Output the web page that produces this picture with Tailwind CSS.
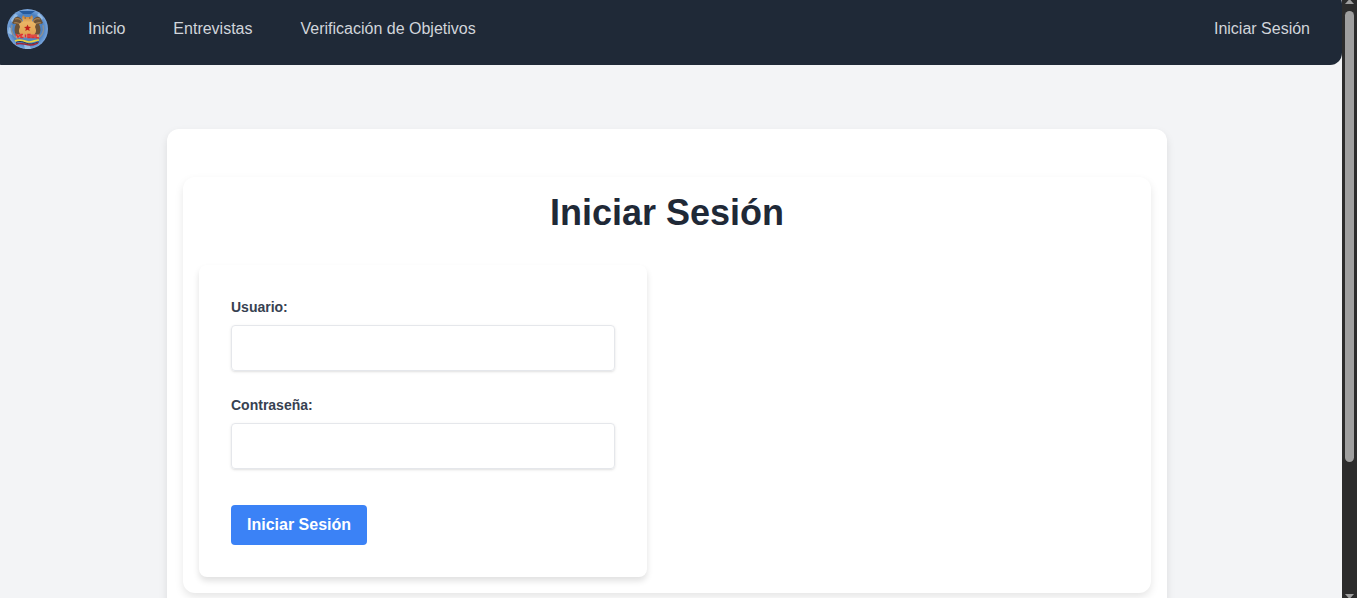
<!DOCTYPE html>
<html lang="es">
<head>
  <meta charset="UTF-8" />
  <meta name="viewport" content="width=device-width, initial-scale=1.0" />
  <title>Iniciar Sesión</title>
  <script src="https://cdn.jsdelivr.net/npm/@tailwindcss/browser@4"></script>
</head>
<body class="flex h-screen overflow-hidden bg-[#f3f4f6] font-['Liberation_Sans',Arial,sans-serif]">
  <div class="min-w-0 flex-1 overflow-hidden">
    <div class="-ml-2 -mt-2">
      <header class="rounded-xl rounded-bl-[10px] bg-[#1f2937] pt-[17px] pb-[15px] pl-[15px] pr-8">
        <nav class="flex items-start text-base text-[#d1d5db]">
          <a href="#" class="mr-10 shrink-0" aria-label="Inicio">
            <svg class="h-[41px] w-[41px]" viewBox="0 0 41 41">
              <defs>
                <radialGradient id="sky" cx="50%" cy="50%" r="50%">
                  <stop offset="0" stop-color="#6d96c4" />
                  <stop offset=".75" stop-color="#4a80c0" />
                  <stop offset="1" stop-color="#79a5dc" />
                </radialGradient>
                <linearGradient id="gold" x1="0" y1="0" x2="0" y2="1">
                  <stop offset="0" stop-color="#c07c38" />
                  <stop offset=".35" stop-color="#eab565" />
                  <stop offset="1" stop-color="#e0a050" />
                </linearGradient>
              </defs>
              <ellipse cx="20.5" cy="20" rx="20.500" ry="20" fill="url(#sky)" />
              <path d="M4 11l4-6 3 1-6 8zM32 4l4 5-1 2-5-5zM17 36l5-1 2 5h-6zM2 18l3 2v6l-4-2z" fill="#b5d5ee" opacity=".6" />
              <path d="M12 2h16l-4 3h-8z" fill="#255a9d" />
              <!-- alas -->
              <path d="M15 11c-3-4-6-4-8-1l-2 4c1 1 3 1 4 1-2 4-2 8 0 11l6 1z" fill="#6b5238" />
              <path d="M26 11c3-4 6-4 8-1l2 4c-1 1-3 1-4 1 2 4 2 8 0 11l-6 1z" fill="#6b5238" />
              <path d="M8 10c3-1 6 0 7 3M7 14c3-1 5 0 7 2M33 10c-3-1-6 0-7 3M34 14c-3-1-5 0-7 2" fill="none" stroke="#a98253" stroke-width="1.200" />
              <path d="M5 16c-2 7 2 12 6 14M36 16c2 7-2 12-6 14" fill="none" stroke="#8b8f94" stroke-width="1.500" />
              <!-- escudo -->
              <path d="M16 6l2 2h5l2-2 1 3-1 3 4 3-1 3c2 4 1 6-2 9H15c-3-3-4-5-2-9l-1-3 4-3-1-3z" fill="url(#gold)" />
              <path d="M17.500 9h1.500M22 9h1.500" stroke="#80502a" stroke-width="1" />
              <path d="M20.500 15.500l1 2.300 2.500.200-1.900 1.600.6 2.400-2.200-1.300-2.200 1.300.6-2.400-1.900-1.600 2.500-.2z" fill="#bf1f1b" />
              <!-- cintas -->
              <path d="M9 27h23" stroke="#d59f80" stroke-width="3" />
              <path d="M9 25l2 3 2-2M16 25.500h-2v3h2.500M18.500 25.500v3M21 28.500v-3h2v3zM25 25.500v3h2v-3M29 25.500v3l3 .5" fill="none" stroke="#e03030" stroke-width="1.500" />
              <path d="M8 32c6-3 9 1 14 1s6-2 10-2" fill="none" stroke="#ecd23c" stroke-width="1.700" />
              <path d="M9 33.500c6-3 9 1.500 14 1.500s6-2 9-2" fill="none" stroke="#263a55" stroke-width="1" />
              <path d="M9 35c6-2 9 1 14 1s5-1 8-2" fill="none" stroke="#a32636" stroke-width="1.500" />
            </svg>
          </a>
          <div class="flex gap-12 pt-2">
            <a href="#" class="hover:text-white">Inicio</a>
            <a href="#" class="hover:text-white">Entrevistas</a>
            <a href="#" class="hover:text-white">Verificación de Objetivos</a>
          </div>
          <a href="#" class="ml-auto pt-2 hover:text-white">Iniciar Sesión</a>
        </nav>
      </header>

      <main class="mx-auto mt-16 max-w-[1000px] rounded-xl bg-white px-4 py-12 shadow-[0_4px_8px_rgba(0,0,0,0.1)]">
        <section class="rounded-xl bg-white p-4 shadow-[0_4px_8px_rgba(0,0,0,0.1)]">
          <h1 class="mb-8 text-center text-4xl font-bold text-[#1f2937]">Iniciar Sesión</h1>

          <form class="max-w-md rounded-lg bg-white p-8 shadow-[0_4px_6px_rgba(0,0,0,0.12)]">
            <div class="mb-6">
              <label for="username" class="mb-2 block text-sm font-bold text-[#374151]">Usuario:</label>
              <input type="text" id="username" name="username" class="block h-[46px] w-full rounded-sm border border-[#e5e7eb] px-3 text-[#374151] shadow-sm" />
            </div>
            <div class="mb-9">
              <label for="password" class="mb-2 block text-sm font-bold text-[#374151]">Contraseña:</label>
              <input type="password" id="password" name="password" class="block h-[46px] w-full rounded-sm border border-[#e5e7eb] px-3 text-[#374151] shadow-sm" />
            </div>
            <button type="submit" class="block rounded-sm bg-[#3b82f6] px-4 py-2 font-bold text-white hover:bg-blue-700">Iniciar Sesión</button>
          </form>
        </section>
      </main>
    </div>
  </div>

  <!-- barra de desplazamiento -->
  <div class="flex w-[15px] shrink-0 flex-col items-center bg-[#2c2c2c]" aria-hidden="true">
    <svg class="h-1 w-[9px] shrink-0" viewBox="0 0 9 4"><path d="M4.500-1L9 4H0z" fill="#9f9f9f" /></svg>
    <div class="mt-[7px] h-[451px] w-[9px] rounded-full bg-[#9f9f9f]"></div>
    <svg class="mt-auto h-1 w-[9px] shrink-0" viewBox="0 0 9 4"><path d="M0 0h9L4.500 5z" fill="#9f9f9f" /></svg>
  </div>
</body>
</html>
